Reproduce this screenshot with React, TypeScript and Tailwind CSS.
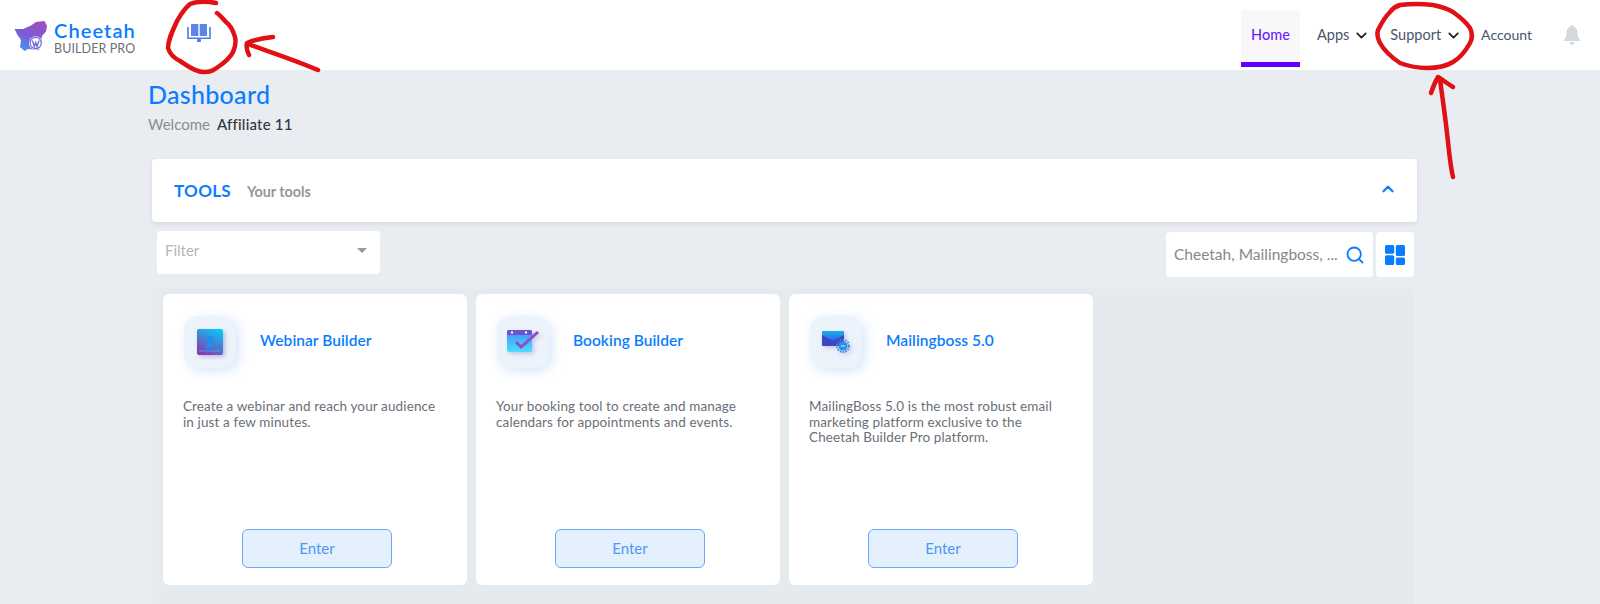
import React from "react";
import { ChevronDown, ChevronUp, Search } from "lucide-react";

const font = "font-['Lato','Noto_Sans',sans-serif]";

const CheetahLogo = () => (
  <svg width="36" height="34" viewBox="0 0 36 34" className="shrink-0">
    <defs>
      <linearGradient id="logoGrad" x1="0.8" y1="0" x2="0.2" y2="1">
        <stop offset="0%" stopColor="#a04cc0" />
        <stop offset="55%" stopColor="#7a5cd8" />
        <stop offset="100%" stopColor="#3f9bf0" />
      </linearGradient>
    </defs>
    <path
      d="M0.500 11 L9 11 L17 7.500 L22 4 L30.500 3 L33 8 L32 13.500 L28 18 L27 24 L25 32 L14 31 L10.700 33 L6 29 L7 22 L3.500 17 Z"
      fill="url(#logoGrad)"
    />
    <circle cx="21.700" cy="25" r="6.800" fill="#fff" />
    <circle cx="21.700" cy="25" r="5.600" fill="none" stroke="#6f68d8" strokeWidth="1.200" />
    <path d="M18.300 22.500 L20.400 28.500 L21.700 24.500 L23 28.500 L25.100 22.500" fill="none" stroke="#6f68d8" strokeWidth="1.400" />
  </svg>
);

const BookIcon = () => (
  <svg width="24" height="18" viewBox="0 0 24 18">
    <path d="M1 3 V14.200 H23 V3" fill="none" stroke="#4a7de6" strokeWidth="1.600" />
    <rect x="4" y="0" width="7.300" height="12" rx="0.500" fill="#5b86e8" />
    <rect x="12.700" y="0" width="7.300" height="12" rx="0.500" fill="#5b86e8" />
    <rect x="10" y="15" width="4" height="3" rx="1" fill="#4a7de6" />
  </svg>
);

const BellIcon = () => (
  <svg width="16" height="20" viewBox="0 0 16 20">
    <path d="M8 0 C9 0 9.500 .7 9.500 1.600 C12.500 2.400 13.500 5 13.500 8 C13.500 11.500 14.500 13.500 16 15 V16 H0 V15 C1.500 13.500 2.500 11.500 2.500 8 C2.500 5 3.500 2.400 6.500 1.600 C6.500 .7 7 0 8 0 Z" fill="#d3d9dc" />
    <path d="M5.500 17 H10.500 C10.500 18.800 9.300 20 8 20 C6.700 20 5.500 18.800 5.500 17 Z" fill="#d3d9dc" />
  </svg>
);

const GridIcon = () => (
  <svg width="20" height="20" viewBox="0 0 20 20" fill="#0a7cff">
    <rect x="0" y="0" width="9.200" height="8.700" rx="1.500" />
    <rect x="10.800" y="0" width="9.200" height="11" rx="1.500" />
    <rect x="0" y="10.300" width="9.200" height="9.700" rx="1.500" />
    <rect x="10.800" y="12.600" width="9.200" height="7.400" rx="1.500" />
  </svg>
);

const WebinarIcon = () => (
  <svg width="26" height="26" viewBox="0 0 26 26" className="drop-shadow-[2px_2px_2px_rgba(70,60,170,0.3)]">
    <defs>
      <linearGradient id="webGrad" x1="0.8" y1="0" x2="0.3" y2="1">
        <stop offset="0%" stopColor="#05c8f8" />
        <stop offset="100%" stopColor="#8a3bae" />
      </linearGradient>
    </defs>
    <rect width="26" height="26" rx="2" fill="url(#webGrad)" />
    <circle cx="13" cy="10" r="3" fill="#1c8ff0" />
    <path d="M9 19.500 C9 15 10.500 13.500 13 13.500 C15.500 13.500 17 15 17 19.500 Z" fill="#1c8ff0" />
    <path d="M2 22 H23" stroke="#39b6f5" strokeWidth="0.800" />
  </svg>
);

const BookingIcon = () => (
  <svg width="34" height="26" viewBox="0 0 34 26" className="drop-shadow-[2px_2px_2px_rgba(70,60,170,0.25)]">
    <defs>
      <linearGradient id="bookGrad" x1="0.5" y1="1" x2="0.5" y2="0">
        <stop offset="0%" stopColor="#4fdcff" />
        <stop offset="100%" stopColor="#3f8ff0" />
      </linearGradient>
    </defs>
    <rect x="1" y="1" width="25" height="22" rx="2" fill="url(#bookGrad)" />
    <path d="M1 3 Q1 1 3 1 H24 Q26 1 26 3 V6 H1 Z" fill="#6a52d0" />
    <rect x="5" y="2.500" width="2" height="2" fill="#fff" />
    <rect x="19" y="2.500" width="2" height="2" fill="#fff" />
    <path d="M10 13 L15 18 L32 3" fill="none" stroke="#8a4fc8" strokeWidth="3" />
  </svg>
);

const MailIcon = () => (
  <svg width="30" height="24" viewBox="0 0 30 24" className="drop-shadow-[2px_2px_2px_rgba(70,60,170,0.25)]">
    <defs>
      <linearGradient id="mailGrad" x1="0.5" y1="0" x2="0.5" y2="1">
        <stop offset="0%" stopColor="#18b0f0" />
        <stop offset="100%" stopColor="#3a5fd8" />
      </linearGradient>
    </defs>
    <rect x="1" y="1" width="22" height="15" rx="1" fill="#3b46c4" />
    <path d="M1 1 H23 V5 L12 11 L1 5 Z" fill="url(#mailGrad)" />
    <circle cx="22" cy="16" r="6" fill="none" stroke="#2e8fe8" strokeWidth="2" strokeDasharray="1.500 1.200" />
    <circle cx="22" cy="16" r="4.500" fill="#2e8fe8" />
    <path d="M20 16 H24" stroke="#cfe6ff" strokeWidth="1" />
  </svg>
);

const tools = [
  {
    name: "Webinar Builder",
    text: ["Create a webinar and reach your audience", "in just a few minutes."],
    icon: <WebinarIcon />,
  },
  {
    name: "Booking Builder",
    text: ["Your booking tool to create and manage", "calendars for appointments and events."],
    icon: <BookingIcon />,
  },
  {
    name: "Mailingboss 5.0",
    text: [
      "MailingBoss 5.0 is the most robust email",
      "marketing platform exclusive to the",
      "Cheetah Builder Pro platform.",
    ],
    icon: <MailIcon />,
  },
];

const ToolCard = ({ name, text, icon }: (typeof tools)[number]) => (
  <div className="flex h-[291px] w-[304px] flex-col rounded-md bg-white pl-[21px]">
    <div className="mt-[22px] flex items-center">
      <div className="flex h-[52px] w-[52px] items-center justify-center rounded-[14px] bg-[#edf3fb] shadow-[3px_3px_12px_rgba(120,170,255,0.3)]">
        {icon}
      </div>
      <span className="mb-[2px] ml-[24px] text-[15.500px] font-semibold tracking-[0.05px] text-[#0a7cff]">{name}</span>
    </div>
    <div className="-ml-px mt-[31px] h-[110px] text-[13.500px] leading-[15.500px] tracking-[0.12px] text-[#6a6f78]">
      {text.map((line) => (
        <div key={line}>{line}</div>
      ))}
    </div>
    <button className="ml-[58px] mt-[20px] h-[39px] w-[150px] rounded-md border border-[#6aa8f8] bg-[#e4f0fd] text-[15px] text-[#4b98f5]">
      Enter
    </button>
  </div>
);

const NavItem = ({ label, margin }: { label: string; margin: string }) => (
  <div className={`flex items-center ${margin}`}>
    <span className="text-[14.500px] text-[#4a5468]">{label}</span>
    <ChevronDown size={17} strokeWidth={2.500} className="ml-[4px] text-[#222]" />
  </div>
);

const Annotations = () => (
  <svg width="1600" height="604" className="pointer-events-none absolute left-0 top-0">
    <g fill="none" stroke="#e01015" strokeWidth="4.500" strokeLinecap="round" strokeLinejoin="round">
      <path d="M216 3 C205 1 195 2 190 4 C183 10 180 16 177 21 C172 32 168 40 168 48 C170 55 174 58 180 61 C188 66 195 72 204 72 C211 72 214 70 218 67 C224 63 230 58 233 52 C236 46 236 42 235 37 C233 30 230 25 226 22 C223 19 220 15 217 13" />
      <path d="M318 70 C295 60 270 52 248 44 M273 37 C262 38 254 40 247 43 C246 47 247 51 249 55" />
      <path d="M1400 5 C1415 3 1425 4 1433 5 C1442 7 1448 9 1453 12 C1460 17 1466 22 1470 28 C1473 34 1472 39 1470 43 C1465 52 1460 58 1453 62 C1445 67 1436 68 1427 68 C1417 68 1408 66 1400 63 C1391 57 1384 50 1380 43 C1377 37 1377 33 1378 30 C1382 22 1385 17 1390 12 C1393 8 1397 6 1400 5 Z" />
      <path d="M1453 177 C1450 165 1449 150 1447 133 C1445 115 1442 95 1440 79 M1431 93 C1433 87 1435 82 1438 77 C1443 80 1448 84 1453 87" />
    </g>
  </svg>
);

export default function App() {
  return (
    <div className={`relative h-[604px] w-[1600px] overflow-hidden bg-[#e9ecf1] ${font}`}>
      <header className="flex h-[70px] items-center bg-white">
        <div className="ml-[14px] flex items-center">
          <CheetahLogo />
          <div className="ml-[4px] mt-[4px]">
            <div className="text-[20px] font-semibold leading-[22px] tracking-[1.100px] text-[#0a7cff]">Cheetah</div>
            <div className="mt-[1px] text-[12.500px] leading-[14px] tracking-[0.1px] text-[#6c6f78]">BUILDER PRO</div>
          </div>
        </div>
        <div className="mb-[4px] ml-[51px] flex items-center">
          <BookIcon />
        </div>
        <nav className="ml-auto flex h-full items-center pr-[20px]">
          <div className="mt-[10px] flex h-[57px] w-[59px] items-center justify-center self-start border-b-[5px] border-[#6200ff] bg-[#f8f8fa] pb-[3px] text-[14.500px] font-medium text-[#6a1fff]">
            Home
          </div>
          <NavItem label="Apps" margin="ml-[17px]" />
          <NavItem label="Support" margin="ml-[20px]" />
          <span className="mb-[2px] ml-[19px] text-[14px] text-[#4a5468]">Account</span>
          <div className="ml-[32px]">
            <BellIcon />
          </div>
        </nav>
      </header>

      <main className="ml-[148px] w-[1269px]">
        <h1 className="mt-[10px] text-[25px] font-medium leading-[28px] tracking-[0.3px] text-[#0a7cff]">Dashboard</h1>
        <p className="mt-[6px] text-[15px] leading-[20px]">
          <span className="text-[#8a8d93]">Welcome</span>
          <span className="ml-[7px] font-medium tracking-[0.2px] text-[#33363c]">Affiliate 11</span>
        </p>

        <section className="ml-[4px] mt-[25px] flex h-[63px] items-center justify-between rounded bg-white pl-[22px] pr-[20px] shadow-[0_2px_4px_rgba(150,160,175,0.2)]">
          <div className="flex items-baseline">
            <span className="text-[17px] font-bold tracking-[0.3px] text-[#0a7cff]">TOOLS</span>
            <span className="ml-[16px] text-[14.300px] font-bold text-[#94979c]">Your tools</span>
          </div>
          <ChevronUp size={18} strokeWidth={3} className="mb-[3px] text-[#0a7cff]" />
        </section>

        <div className="ml-[9px] mt-[9px] flex items-start justify-between pr-[3px]">
          <div className="flex h-[43px] w-[223px] items-center justify-between rounded bg-white pb-[5px] pl-[8px] pr-[13px]">
            <span className="text-[15px] text-[#b4b6b9]">Filter</span>
            <span className="h-0 w-0 border-x-[5.500px] border-t-[5px] border-x-transparent border-t-[#999]" />
          </div>
          <div className="mt-[1px] flex gap-[3px]">
            <div className="flex h-[45px] w-[207px] items-center justify-between rounded bg-white pl-[8px] pr-[8px]">
              <span className="text-[15.500px] text-[#85888d]">Cheetah, Mailingboss, ...</span>
              <Search size={20} strokeWidth={2.200} className="text-[#0a7cff]" />
            </div>
            <div className="flex h-[45px] w-[38px] items-center justify-center rounded bg-white">
              <GridIcon />
            </div>
          </div>
        </div>

        <div className="ml-[5px] mr-[3px] mt-[7px] h-[320px] bg-gradient-to-b from-[#e9ecf1] to-[#e5eaee] to-[8px] pl-[10px] pt-[10px]">
          <div className="flex gap-[9px]">
            {tools.map((tool) => (
              <ToolCard key={tool.name} {...tool} />
            ))}
          </div>
        </div>
      </main>

      <Annotations />
    </div>
  );
}
